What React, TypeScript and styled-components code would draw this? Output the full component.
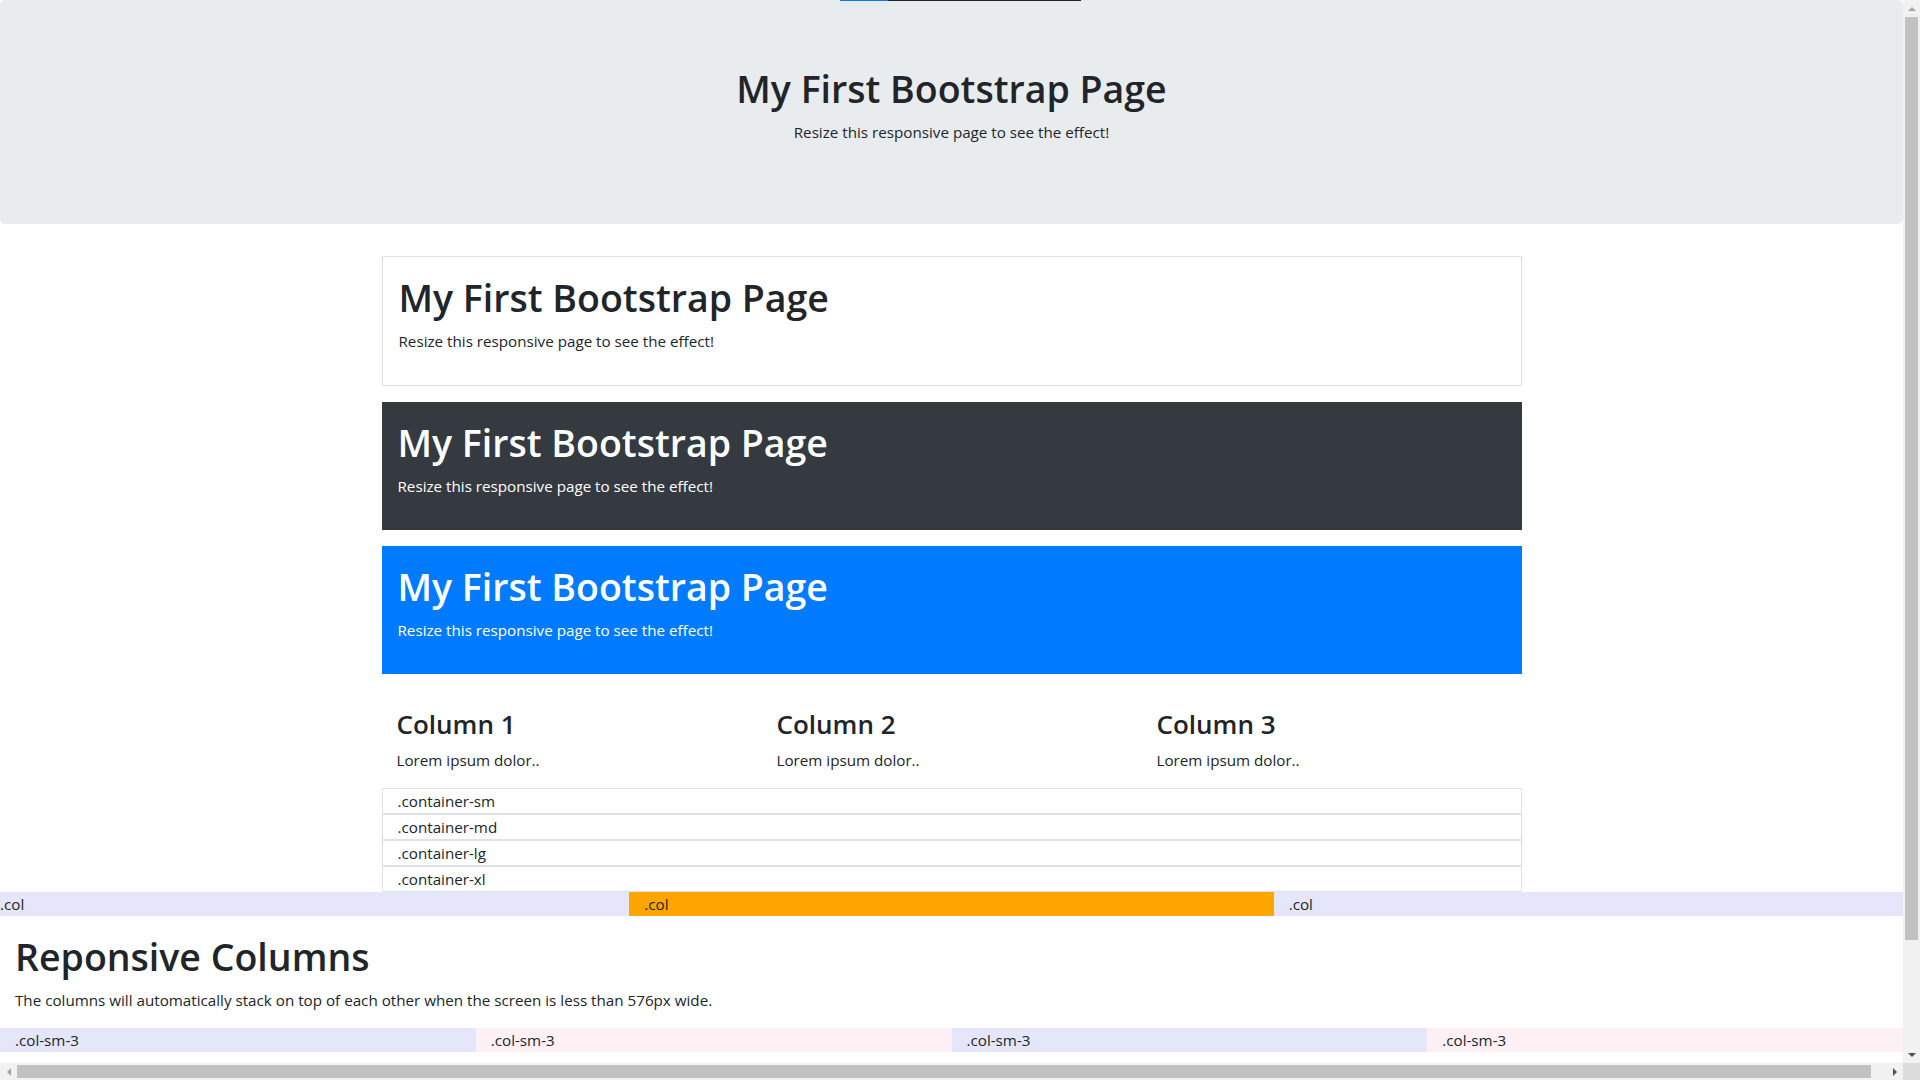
import React from "react";
import styled, { createGlobalStyle, css } from "styled-components";

const GlobalStyle = createGlobalStyle`
  *, *::before, *::after { box-sizing: border-box; }
  html, body { margin: 0; padding: 0; height: 100%; overflow: hidden; }
  body {
    font-family: "Open Sans", "Noto Sans", "Liberation Sans", sans-serif;
    font-size: 15.2px;
    line-height: 24px;
    color: #212529;
    background: #fff;
  }
`;

const Frame = styled.div`
  width: 100vw;
  height: 100vh;
  display: grid;
  grid-template-columns: 1fr 17px;
  grid-template-rows: 1fr 17px;
`;

const Viewport = styled.div`
  position: relative;
  overflow: hidden;
  background: #fff;
`;

const TopLine = styled.div`
  position: absolute;
  top: 0;
  left: 840px;
  width: 241px;
  height: 1px;
  display: flex;
  z-index: 2;
`;

const TopLinePart = styled.div<{ $color: string; $w: string }>`
  width: ${(p) => p.$w};
  background: ${(p) => p.$color};
`;

const Jumbotron = styled.div`
  padding: 64px 32px;
  margin-bottom: 32px;
  background: #e9ecef;
  border-radius: 4.8px;
  text-align: center;
`;

const H1 = styled.h1`
  font-size: 37.5px;
  font-weight: 600;
  line-height: 48px;
  margin: 0 0 8px;
  padding-top: 1px;
  height: 48px;
`;

const H3 = styled.h3`
  font-size: 26px;
  font-weight: 600;
  line-height: 33.6px;
  margin: 0 0 8px;
  padding-top: 2px;
  height: 33.6px;
`;

const P = styled.p`
  margin: 0 0 16px;
  line-height: 24px;
`;

type Variant = "border" | "dark" | "primary";

const Box = styled.div<{ $variant: Variant }>`
  width: 1140px;
  margin: 16px auto;
  padding: 16px;
  ${(p) =>
    p.$variant === "border" &&
    css`
      border: 1px solid #dee2e6;
    `}
  ${(p) =>
    p.$variant === "dark" &&
    css`
      background: #343a40;
      color: #fff;
    `}
  ${(p) =>
    p.$variant === "primary" &&
    css`
      background: #007bff;
      color: #fff;
    `}
`;

const ColumnsContainer = styled.div`
  width: 1140px;
  margin: 32px auto 0;
  padding: 0 15px;
`;

const Row = styled.div`
  display: flex;
  margin: 0 -15px;
`;

const Col = styled.div<{ $basis: string; $bg?: string }>`
  flex: 0 0 ${(p) => p.$basis};
  max-width: ${(p) => p.$basis};
  padding: 0 15px;
  background: ${(p) => p.$bg || "transparent"};
`;

const SizedContainer = styled.div`
  width: 1140px;
  margin: 0 auto;
  padding: 0 15px;
  border: 1px solid #dee2e6;
  line-height: 24px;
`;

const FluidContainer = styled.div`
  padding: 0 15px;
  margin-top: 16px;
`;

/* ---- fake browser scrollbars ---- */

const VScroll = styled.div`
  background: #f1f1f1;
  display: flex;
  flex-direction: column;
`;

const HScroll = styled.div`
  background: #f1f1f1;
  display: flex;
`;

const Corner = styled.div`
  background: #dcdcdc;
`;

const ArrowBtn = styled.div`
  flex: 0 0 17px;
  width: 17px;
  height: 17px;
  display: flex;
  align-items: center;
  justify-content: center;
`;

const Tri = styled.div<{ $dir: "up" | "down" | "left" | "right"; $active?: boolean }>`
  width: 0;
  height: 0;
  ${(p) => {
    const c = p.$active ? "#505050" : "#a3a3a3";
    switch (p.$dir) {
      case "up":
        return css`
          border-left: 4px solid transparent;
          border-right: 4px solid transparent;
          border-bottom: 4px solid ${c};
        `;
      case "down":
        return css`
          border-left: 4px solid transparent;
          border-right: 4px solid transparent;
          border-top: 4px solid ${c};
        `;
      case "left":
        return css`
          border-top: 4px solid transparent;
          border-bottom: 4px solid transparent;
          border-right: 4px solid ${c};
        `;
      default:
        return css`
          border-top: 4px solid transparent;
          border-bottom: 4px solid transparent;
          border-left: 4px solid ${c};
        `;
    }
  }}
`;

const VTrack = styled.div`
  flex: 1;
  padding: 0 2px;
  display: flex;
  flex-direction: column;
`;

const VThumb = styled.div`
  flex: 0 0 923px;
  background: #c1c1c1;
`;

const HTrack = styled.div`
  flex: 1;
  padding: 2px 0;
  display: flex;
`;

const HThumb = styled.div`
  flex: 0 0 calc(100% - 15px);
  background: #c1c1c1;
`;

const title = "My First Bootstrap Page";
const sub = "Resize this responsive page to see the effect!";

export default function App() {
  return (
    <>
      <GlobalStyle />
      <Frame>
        <Viewport>
          <TopLine>
            <TopLinePart $color="#007bff" $w="48px" />
            <TopLinePart $color="#212529" $w="193px" />
          </TopLine>

          <Jumbotron>
            <H1>{title}</H1>
            <P>{sub}</P>
          </Jumbotron>

          <Box $variant="border">
            <H1>{title}</H1>
            <P>{sub}</P>
          </Box>
          <Box $variant="dark">
            <H1>{title}</H1>
            <P>{sub}</P>
          </Box>
          <Box $variant="primary">
            <H1>{title}</H1>
            <P>{sub}</P>
          </Box>

          <ColumnsContainer>
            <Row>
              {["Column 1", "Column 2", "Column 3"].map((c) => (
                <Col key={c} $basis="33.333333%">
                  <H3>{c}</H3>
                  <P>Lorem ipsum dolor..</P>
                </Col>
              ))}
            </Row>
          </ColumnsContainer>

          {[".container-sm", ".container-md", ".container-lg", ".container-xl"].map((t) => (
            <SizedContainer key={t}>{t}</SizedContainer>
          ))}

          <Row>
            <Col $basis="33.333333%" $bg="lavender">.col</Col>
            <Col $basis="33.333333%" $bg="orange">.col</Col>
            <Col $basis="33.333333%" $bg="lavender">.col</Col>
          </Row>

          <FluidContainer>
            <H1>Reponsive Columns</H1>
            <P>The columns will automatically stack on top of each other when the screen is less than 576px wide.</P>
            <Row>
              <Col $basis="25%" $bg="lavender">.col-sm-3</Col>
              <Col $basis="25%" $bg="lavenderblush">.col-sm-3</Col>
              <Col $basis="25%" $bg="lavender">.col-sm-3</Col>
              <Col $basis="25%" $bg="lavenderblush">.col-sm-3</Col>
            </Row>
          </FluidContainer>
        </Viewport>

        <VScroll>
          <ArrowBtn>
            <Tri $dir="up" />
          </ArrowBtn>
          <VTrack>
            <VThumb />
          </VTrack>
          <ArrowBtn>
            <Tri $dir="down" $active />
          </ArrowBtn>
        </VScroll>

        <HScroll>
          <ArrowBtn>
            <Tri $dir="left" />
          </ArrowBtn>
          <HTrack>
            <HThumb />
          </HTrack>
          <ArrowBtn>
            <Tri $dir="right" $active />
          </ArrowBtn>
        </HScroll>
        <Corner />
      </Frame>
    </>
  );
}
